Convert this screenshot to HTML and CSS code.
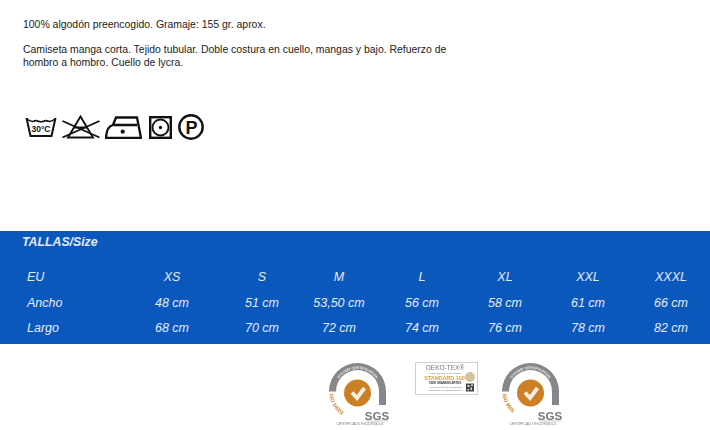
FILE: index.html
```html
<!DOCTYPE html>
<html lang="es">
<head>
    <meta charset="UTF-8">
    <title>Camiseta manga corta</title>
    <link rel="stylesheet" href="styles.css">
</head>
<body>
    <!-- Description -->
    <div class="description">
        <p>100% algodón preencogido. Gramaje: 155 gr. aprox.</p>
        <p>Camiseta manga corta. Tejido tubular. Doble costura en cuello, mangas y bajo. Refuerzo de<br>hombro a hombro. Cuello de lycra.</p>
    </div>

    <!-- Care icons -->
    <div class="care-icons">
        <svg viewBox="0 0 32 22" width="32" height="22">
            <path d="M1.500 2 L5.500 20 H26.500 L30.500 2" fill="none" stroke="#111" stroke-width="2"/>
            <path d="M1.500 2.500 C5 6 8 6 11 4.500 C14 6 18 6 21 4.500 C24 6 27 6 30.500 2.500" fill="none" stroke="#111" stroke-width="1.500"/>
            <text x="16" y="16" class="wash-temp" text-anchor="middle">30°C</text>
        </svg>
        <svg viewBox="0 0 38 24" width="38" height="24">
            <path d="M18.500 1.500 L31 22.500 H6 Z M12.500 12.500 H24.500" fill="none" stroke="#111" stroke-width="1.900"/>
            <path d="M0.500 6 L37.500 22.500 M37.500 6 L0.500 22.500" fill="none" stroke="#111" stroke-width="1.900"/>
        </svg>
        <svg viewBox="0 0 37 23" width="37" height="23">
            <path d="M8 9 L11 1.500 H32 L36 22 H1 Q1.500 10.500 8 9 H32" fill="none" stroke="#111" stroke-width="2.300"/>
            <circle cx="17.700" cy="15.700" r="2.100" fill="#111"/>
        </svg>
        <svg class="icon-dry" viewBox="0 0 23 23" width="23" height="23">
            <rect x="1.200" y="1.200" width="20.600" height="20.600" fill="none" stroke="#111" stroke-width="2.400"/>
            <circle cx="11.500" cy="11.500" r="8" fill="none" stroke="#111" stroke-width="1.900"/>
            <circle cx="11.500" cy="11.500" r="1.700" fill="#111"/>
        </svg>
        <svg class="icon-clean" viewBox="0 0 26 26" width="26" height="26">
            <circle cx="13" cy="13" r="11.700" fill="none" stroke="#111" stroke-width="2.400"/>
            <text x="13.500" y="19.500" class="clean-letter" text-anchor="middle">P</text>
        </svg>
    </div>

    <!-- Sizes -->
    <div class="sizes">
        <div class="sizes-title">TALLAS/Size</div>
        <div class="sizes-table">
            <div class="row-label">EU</div><div>XS</div><div>S</div><div>M</div><div>L</div><div>XL</div><div>XXL</div><div>XXXL</div>
            <div class="row-label">Ancho</div><div>48 cm</div><div>51 cm</div><div>53,50 cm</div><div>56 cm</div><div>58 cm</div><div>61 cm</div><div>66 cm</div>
            <div class="row-label">Largo</div><div>68 cm</div><div>70 cm</div><div>72 cm</div><div>74 cm</div><div>76 cm</div><div>78 cm</div><div>82 cm</div>
        </div>
    </div>

    <!-- Certificates -->
    <div class="certs">
        <svg class="cert-sgs" viewBox="0 0 64 70" width="64" height="70">
            <defs><path id="arc-a" d="M7 30.500 A22.500 22.500 0 0 1 52 30.500"/><path id="arc-b" d="M1.500 33 A28 28 0 0 0 15 54.500"/></defs>
            <path d="M1 30.500 A28.500 28.500 0 0 1 58 30.500 V44 H51 V30.500 A21.500 21.500 0 0 0 8 30.500 Z" fill="#85878a"/>
            <text class="arc-text" text-anchor="middle"><textPath href="#arc-a" startOffset="50%">SYSTEM CERTIFICATION</textPath></text>
            <circle cx="29.500" cy="32" r="13.500" fill="#cc8026"/>
            <path d="M24 31.500 L29 37 L36.500 27" fill="none" stroke="#f6efe4" stroke-width="3.800"/>
            <text class="iso-text"><textPath href="#arc-b">ISO 14001</textPath></text>
            <text x="49" y="58.500" class="sgs-text" text-anchor="middle">SGS</text>
            <path d="M38 60 H60" stroke="#b9a58c" stroke-width="0.600"/>
            <text x="32" y="64" class="cert-note" text-anchor="middle">CERTIFICADO ES15/9030.01</text>
        </svg>

        <svg class="cert-oeko" viewBox="0 0 63 33" width="63" height="33">
            <rect x="0.500" y="0.500" width="62" height="32" fill="#fff" stroke="#cfcfcf"/>
            <text x="30" y="8" class="oeko-name" text-anchor="middle">OEKO-TEX®</text>
            <text x="30" y="11.500" class="oeko-small" text-anchor="middle">CONFIDENCE IN TEXTILES</text>
            <text x="29.500" y="17.500" class="oeko-standard" text-anchor="middle">STANDARD 100</text>
            <circle cx="55" cy="15" r="5" fill="#d3c3a6"/>
            <text x="30" y="22" class="oeko-dark" text-anchor="middle">19DR GRANDES ARTES</text>
            <text x="31" y="26" class="oeko-small" text-anchor="middle">Tested for harmful substances</text>
            <text x="31" y="29" class="oeko-small" text-anchor="middle">www.oeko-tex.com/standard100</text>
            <path d="M51 21.500 h8 v8 h-8 Z" fill="#444"/>
            <path d="M52.500 23 h2 v2 h-2 Z M56 22.500 h2 v1.500 h-2 Z M52.500 27 h1.500 v1.500 h-1.500 Z M55.500 25.500 h1.500 v2.500 h-1.500 Z" fill="#ddd"/>
        </svg>

        <svg class="cert-sgs" viewBox="0 0 64 70" width="64" height="70">
            <defs><path id="arc-c" d="M7 30.500 A22.500 22.500 0 0 1 52 30.500"/><path id="arc-d" d="M1.500 33 A28 28 0 0 0 15 54.500"/></defs>
            <path d="M1 30.500 A28.500 28.500 0 0 1 58 30.500 V44 H51 V30.500 A21.500 21.500 0 0 0 8 30.500 Z" fill="#85878a"/>
            <text class="arc-text" text-anchor="middle"><textPath href="#arc-c" startOffset="50%">SYSTEM CERTIFICATION</textPath></text>
            <circle cx="29.500" cy="32" r="13.500" fill="#cc8026"/>
            <path d="M24 31.500 L29 37 L36.500 27" fill="none" stroke="#f6efe4" stroke-width="3.800"/>
            <text class="iso-text"><textPath href="#arc-d">ISO 9001</textPath></text>
            <text x="49" y="58.500" class="sgs-text" text-anchor="middle">SGS</text>
            <path d="M38 60 H60" stroke="#b9a58c" stroke-width="0.600"/>
            <text x="32" y="64" class="cert-note" text-anchor="middle">CERTIFICADO ES15/9030.01</text>
        </svg>
    </div>
</body>
</html>
```

FILE: styles.css
```css
body {
    margin: 0;
    height: 430px;
    overflow: hidden;
    background: #fff;
    font-family: "Liberation Sans", Arial, sans-serif;
}

/* Description */
.description {
    padding: 18px 0 0 23px;
    height: 98px;
    box-sizing: border-box;
    font-size: 10.450px;
    line-height: 13px;
    color: #222;
}
.description p {
    margin: 0 0 12px 0;
}

/* Care icons */
.care-icons {
    display: flex;
    align-items: center;
    gap: 5px;
    height: 133px;
    padding: 0 0 75px 25px;
    box-sizing: border-box;
}
.icon-dry {
    margin-left: 2px;
}
.icon-clean {
    margin-left: 1px;
}
.wash-temp {
    font: bold 8.500px "Liberation Sans", sans-serif;
    fill: #111;
}
.clean-letter {
    font: bold 18px "Liberation Sans", sans-serif;
    fill: #111;
}

/* Sizes */
.sizes {
    height: 113px;
    overflow: hidden;
    background: #0b58bd;
    color: #e4ebf6;
}
.sizes-title {
    padding: 4px 0 0 22px;
    font-size: 12.300px;
    line-height: 14px;
    font-weight: bold;
    font-style: italic;
}
.sizes-table {
    display: grid;
    grid-template-columns: 117.500px 109px 71px repeat(5, 83px);
    grid-auto-rows: 25.500px;
    align-items: center;
    margin-top: 15.500px;
    font-size: 12.500px;
    font-style: italic;
    text-align: center;
}
.row-label {
    padding-left: 27px;
    text-align: left;
}

/* Certificates */
.certs {
    display: flex;
    align-items: flex-start;
    padding: 17px 0 0 328px;
}
.cert-sgs,
.cert-oeko {
    filter: blur(0.3px);
}
.cert-oeko {
    margin: 1px 0 0 23px;
}
.cert-sgs + .cert-oeko + .cert-sgs {
    margin-left: 23px;
}
.arc-text {
    font: bold 3.600px "Liberation Sans", sans-serif;
    fill: #eee;
}
.iso-text {
    font: bold 5.300px "Liberation Sans", sans-serif;
    fill: #cc8026;
}
.sgs-text {
    font: bold 11.500px "Liberation Sans", sans-serif;
    fill: #77797c;
}
.cert-note {
    font: 3.500px "Liberation Sans", sans-serif;
    fill: #777;
}
.oeko-name {
    font: 6.500px "Liberation Sans", sans-serif;
    fill: #777;
}
.oeko-small {
    font: 2.400px "Liberation Sans", sans-serif;
    fill: #777;
}
.oeko-standard {
    font: bold 5.400px "Liberation Sans", sans-serif;
    fill: #dfa035;
}
.oeko-dark {
    font: bold 2.800px "Liberation Sans", sans-serif;
    fill: #333;
}
```
